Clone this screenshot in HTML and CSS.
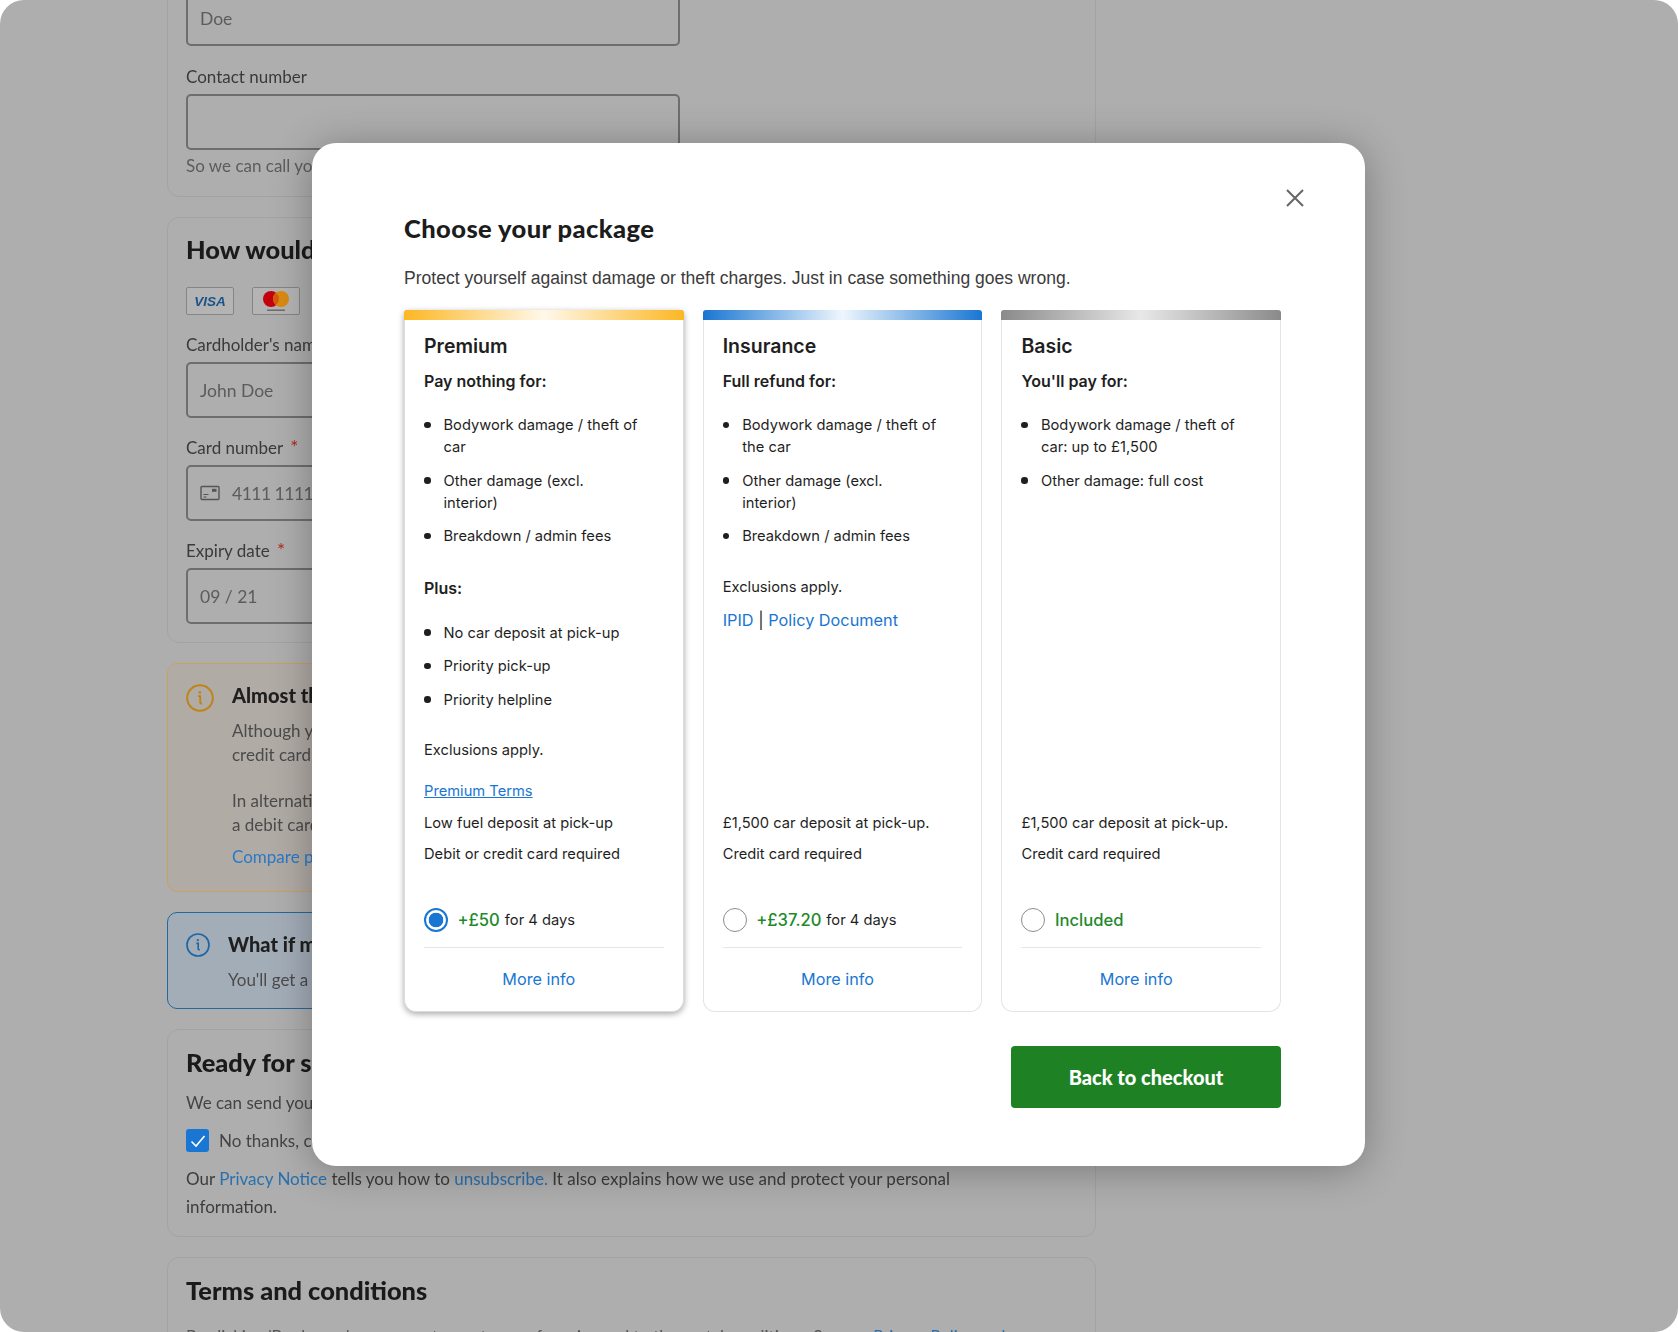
FILE: index.html
```html
<!DOCTYPE html>
<html lang="en">
<head>
<meta charset="utf-8">
<title>Choose your package</title>
<link rel="stylesheet" href="styles.css">
</head>
<body>
<div class="screen">
  <main class="checkout">
    <section class="panel panel-contact">
      <div class="input">Doe</div>
      <div class="label label-first">Contact number</div>
      <div class="input"></div>
      <p class="hint">So we can call you if there are any issues</p>
    </section>

    <section class="panel panel-pay">
      <h2 class="heading">How would you pay</h2>
      <div class="brands">
        <span class="brand"><span class="visa">VISA</span></span>
        <span class="brand">
          <svg class="mc" width="30" height="24" viewBox="0 0 30 24" aria-hidden="true">
            <circle cx="10" cy="10" r="8" fill="#c4000f"/>
            <circle cx="20" cy="10" r="8" fill="#d98a12"/>
            <path d="M15 3.8a8 8 0 0 1 0 12.4a8 8 0 0 1 0-12.4z" fill="#d55a0c"/>
            <rect x="6" y="20.5" width="18" height="1.4" fill="#666"/>
          </svg>
        </span>
      </div>
      <div class="label">Cardholder's name</div>
      <div class="input">John Doe</div>
      <div class="label">Card number <span class="req">*</span></div>
      <div class="input">
        <svg class="card-icon" width="20" height="16" viewBox="0 0 20 16" aria-hidden="true">
          <rect x="1" y="1.5" width="18" height="13" rx="1" fill="none" stroke="#555" stroke-width="1.4"/>
          <rect x="12" y="3.8" width="4.5" height="3" fill="#555"/>
          <path d="M3.5 9.5h5M3.5 12h3" stroke="#555" stroke-width="1.2"/>
        </svg>
        <span class="card-digits">4111 1111 1111 1111</span>
      </div>
      <div class="label">Expiry date <span class="req">*</span></div>
      <div class="input">09 / 21</div>
    </section>

    <section class="alert alert-amber">
      <svg class="alert-icon" width="28" height="28" viewBox="0 0 28 28" aria-hidden="true">
        <circle cx="14" cy="14" r="12.8" fill="none" stroke="#bf8416" stroke-width="2"/>
        <path d="M12 12.2h2.2v6.2c0 1 .6 1.3 1.9 1" fill="none" stroke="#bf8416" stroke-width="1.8"/>
        <circle cx="13.8" cy="8.4" r="1.3" fill="#bf8416"/>
      </svg>
      <div class="alert-body">
        <h3 class="alert-title">Almost there</h3>
        <p class="alert-text">Although you can pay by<br>credit card at pick-up</p>
        <p class="alert-text alert-gap">In alternative, you can use<br>a debit card at pick-up</p>
        <a class="alert-link">Compare packages</a>
      </div>
    </section>

    <section class="alert alert-blue">
      <svg class="alert-icon-small" width="24" height="24" viewBox="0 0 24 24" aria-hidden="true">
        <circle cx="12" cy="12" r="11" fill="none" stroke="#1f66a6" stroke-width="1.7"/>
        <path d="M10.4 10.4h1.8v5.4c0 .8.5 1.1 1.6.8" fill="none" stroke="#1f66a6" stroke-width="1.6"/>
        <circle cx="11.8" cy="7.2" r="1.1" fill="#1f66a6"/>
      </svg>
      <div class="alert-body">
        <h3 class="alert-title">What if my plans change?</h3>
        <p class="alert-text">You'll get a full refund if you cancel</p>
      </div>
    </section>

    <section class="panel panel-ready">
      <h2 class="heading">Ready for special offers?</h2>
      <p class="body-line">We can send you our latest deals</p>
      <div class="check-row">
        <span class="checkbox">
          <svg width="16" height="14" viewBox="0 0 16 14" aria-hidden="true"><path d="M1.5 7.5l4.5 4.5L14.5 2" fill="none" stroke="#fff" stroke-width="1.6"/></svg>
        </span>
        <span class="body-text">No thanks, conditions apply</span>
      </div>
      <p class="privacy">Our <a>Privacy Notice</a> tells you how to <a>unsubscribe.</a> It also explains how we use and protect your personal<br>information.</p>
    </section>

    <section class="panel panel-terms">
      <h2 class="heading">Terms and conditions</h2>
      <p class="terms-line">By clicking 'Book now', you agree to our terms of service and to the rental conditions. See our <a>Privacy Policy and</a></p>
    </section>
  </main>

  <div class="modal" role="dialog">
    <svg class="close" width="18" height="18" viewBox="0 0 18 18" aria-hidden="true"><path d="M1 1l16 16M17 1L1 17" stroke="#666" stroke-width="2" fill="none"/></svg>
    <h1 class="modal-title">Choose your package</h1>
    <p class="modal-sub">Protect yourself against damage or theft charges. Just in case something goes wrong.</p>

    <div class="plans">
      <article class="plan plan-selected">
        <div class="bar bar-amber"></div>
        <div class="plan-inner">
          <h2 class="plan-name">Premium</h2>
          <h3 class="plan-lead">Pay nothing for:</h3>
          <ul class="list">
            <li>Bodywork damage / theft of<br>car</li>
            <li>Other damage (excl.<br>interior)</li>
            <li>Breakdown / admin fees</li>
          </ul>
          <h3 class="plan-lead plan-plus">Plus:</h3>
          <ul class="list">
            <li>No car deposit at pick-up</li>
            <li>Priority pick-up</li>
            <li>Priority helpline</li>
          </ul>
          <p class="note">Exclusions apply.</p>
          <a class="terms-link">Premium Terms</a>
          <div class="req-block">
            <p>Low fuel deposit at pick-up</p>
            <p>Debit or credit card required</p>
          </div>
          <div class="price-row">
            <span class="radio radio-on"></span>
            <span class="price">+£50</span>
            <span class="per">for 4 days</span>
          </div>
          <a class="more">More info</a>
        </div>
      </article>

      <article class="plan">
        <div class="bar bar-blue"></div>
        <div class="plan-inner">
          <h2 class="plan-name">Insurance</h2>
          <h3 class="plan-lead">Full refund for:</h3>
          <ul class="list">
            <li>Bodywork damage / theft of<br>the car</li>
            <li>Other damage (excl.<br>interior)</li>
            <li>Breakdown / admin fees</li>
          </ul>
          <p class="note">Exclusions apply.</p>
          <p class="docs"><a>IPID</a> | <a>Policy Document</a></p>
          <div class="req-block">
            <p>£1,500 car deposit at pick-up.</p>
            <p>Credit card required</p>
          </div>
          <div class="price-row">
            <span class="radio"></span>
            <span class="price">+£37.20</span>
            <span class="per">for 4 days</span>
          </div>
          <a class="more">More info</a>
        </div>
      </article>

      <article class="plan">
        <div class="bar bar-grey"></div>
        <div class="plan-inner">
          <h2 class="plan-name">Basic</h2>
          <h3 class="plan-lead">You'll pay for:</h3>
          <ul class="list">
            <li>Bodywork damage / theft of<br>car: up to £1,500</li>
            <li>Other damage: full cost</li>
          </ul>
          <div class="req-block">
            <p>£1,500 car deposit at pick-up.</p>
            <p>Credit card required</p>
          </div>
          <div class="price-row">
            <span class="radio"></span>
            <span class="price">Included</span>
          </div>
          <a class="more">More info</a>
        </div>
      </article>
    </div>

    <div class="actions">
      <button class="back">Back to checkout</button>
    </div>
  </div>
</div>
</body>
</html>
```
FILE: styles.css
```css
* { box-sizing: border-box; }
html, body { margin: 0; padding: 0; background: #fff; }
h1, h2, h3, p, ul { margin: 0; padding: 0; }
.screen {
  position: relative;
  width: 1678px;
  height: 1332px;
  overflow: hidden;
  border-radius: 24px;
  background: #aeaeae;
  font-family: Lato, "Liberation Sans", sans-serif;
  color: #404040;
}
.checkout {
  width: 929px;
  margin: -30px 0 0 167px;
  display: flex;
  flex-direction: column;
  gap: 20px;
  filter: blur(.4px);
}
.panel {
  border: 1px solid #a3a3a3;
  border-radius: 12px;
  padding: 19px 18px 18px;
}
.panel-pay { padding-top: 15px; }
.panel-ready { padding: 16px 18px 15px; }
.panel-terms { padding-top: 16px; height: 120px; }
.heading {
  font-size: 25.4px;
  line-height: 32px;
  font-weight: 900;
  color: #1a1a1a;
}
.label {
  font-size: 17px;
  line-height: 24px;
  margin: 18px 0 5px;
  color: #3a3a3a;
}
.label-first { margin-top: 19px; }
.req { color: #b3261e; font-size: 19px; line-height: 1; margin-left: 3px; }
.input {
  width: 494px;
  height: 56px;
  border: 2px solid #6e6e6e;
  border-radius: 5px;
  padding: 0 12px;
  display: flex;
  align-items: center;
  gap: 12px;
  font-size: 17.5px;
  color: #5c5c5c;
}
.card-digits { letter-spacing: -.5px; white-space: nowrap; }
.hint { font-size: 17px; line-height: 24px; margin-top: 4px; color: #5c5c5c; }
.brands { display: flex; gap: 18px; margin-top: 22px; }
.brand {
  width: 48px;
  height: 28px;
  border: 1px solid #858585;
  border-radius: 2px;
  background: #b4b4b4;
  display: flex;
  align-items: center;
  justify-content: center;
}
.visa {
  font: italic 700 13.5px "Liberation Sans", sans-serif;
  color: #1a5389;
}
.mc { display: block; }
.card-icon { flex: none; }

.alert {
  border-radius: 10px;
  border: 1.5px solid;
  display: flex;
  padding-left: 18px;
}
.alert-amber {
  background: #b1aba6;
  border-color: #cc9f63;
  height: 229px;
  padding-top: 17px;
  gap: 18px;
}
.alert-blue {
  background: #a3adb8;
  border-color: #22699f;
  height: 97px;
  padding-top: 16.5px;
  gap: 18px;
}
.alert-icon { margin-top: 2.5px; flex: none; }
.alert-icon-small { margin-top: 3.5px; flex: none; }
.alert-title { font-size: 20px; line-height: 28px; font-weight: 900; color: #1f1f1f; }
.alert-text { font-size: 17px; line-height: 23.5px; margin-top: 10px; color: #4b4b4b; }
.alert-gap { margin-top: 23px; }
.alert-link { display: block; font-size: 17px; line-height: 24px; margin-top: 9px; color: #2a79c6; }

.body-line { font-size: 17px; line-height: 24px; margin-top: 13px; color: #444; }
.check-row { display: flex; align-items: center; gap: 10px; margin-top: 14px; }
.checkbox {
  width: 23px;
  height: 23px;
  border-radius: 3px;
  background: #1976d2;
  display: flex;
  align-items: center;
  justify-content: center;
}
.body-text { font-size: 17px; color: #444; }
.privacy { font-size: 17.03px; line-height: 28px; margin-top: 13px; color: #3c3c3c; }
.privacy a { color: #2a70ae; }
.terms-line { font-size: 16.8px; line-height: 24px; margin-top: 19px; color: #555; white-space: nowrap; }
.terms-line a { color: #2a70ae; }

.modal {
  position: absolute;
  left: 312px;
  top: 143px;
  width: 1053px;
  height: 1023px;
  background: #fff;
  border-radius: 24px;
  padding: 69px 84px 58px 92px;
  box-shadow: 0 4px 40px rgba(0, 0, 0, .3);
  color: #1f1f1f;
  font-family: Inter, "Liberation Sans", sans-serif;
}
.close { position: absolute; right: 61px; top: 46px; }
.modal-title {
  font-family: Lato, sans-serif;
  font-size: 25.5px;
  letter-spacing: .42px;
  line-height: 32px;
  font-weight: 900;
  color: #1c1c1c;
}
.modal-sub {
  font-family: "Liberation Sans", sans-serif;
  font-size: 17.55px;
  line-height: 24px;
  margin-top: 22px;
  color: #3b3b3b;
}
.plans {
  display: grid;
  grid-template-columns: repeat(3, 279.6px);
  justify-content: space-between;
  height: 702px;
  margin-top: 20px;
}
.plan {
  display: flex;
  flex-direction: column;
  border: 1px solid #e4e4e4;
  border-top: 0;
  border-radius: 4px 4px 12px 12px;
  background: #fff;
}
.plan-selected { box-shadow: 0 2px 6px rgba(0, 0, 0, .35); border-color: #dcdcdc; }
.bar { height: 10px; margin: 0 -1px; border-radius: 3px 3px 0 0; flex: none; }
.bar-amber { background: linear-gradient(90deg, #fcb723, #fff8ea 50%, #fcb723); }
.bar-blue { background: linear-gradient(90deg, #1976d2, #eef6fd 50%, #1976d2); }
.bar-grey { background: linear-gradient(90deg, #8a8a8a, #e8e8e8 50%, #8a8a8a); }
.plan-inner {
  flex: 1;
  display: flex;
  flex-direction: column;
  padding: 12px 19px 20px;
}
.plan-name { font-size: 19.5px; line-height: 28px; font-weight: 600; }
.plan-lead { font-size: 16px; line-height: 24px; font-weight: 600; margin-top: 9px; }
.plan-plus { margin-top: 28.5px; }
.list { list-style: none; margin-top: 21px; display: flex; flex-direction: column; gap: 11.5px; }
.plan-plus + .list { margin-top: 22px; }
.list li {
  display: flex;
  gap: 13px;
  font-size: 14.7px;
  line-height: 22px;
}
.list li::before {
  content: "";
  flex: none;
  width: 6.5px;
  height: 6.5px;
  border-radius: 50%;
  background: #1f1f1f;
  margin-top: 7.5px;
}
.note { font-size: 14.7px; line-height: 22px; margin-top: 28.5px; }
.terms-link {
  font-size: 14.7px;
  line-height: 22px;
  margin-top: 19px;
  color: #1976d2;
  text-decoration: underline;
}
.docs { font-size: 16.3px; line-height: 24px; margin-top: 10px; }
.docs a { color: #1976d2; }
.req-block {
  margin-top: auto;
  display: flex;
  flex-direction: column;
  gap: 9px;
  font-size: 14.7px;
  line-height: 22px;
}
.price-row {
  display: flex;
  align-items: center;
  margin-top: 43px;
  padding-bottom: 15px;
  border-bottom: 1px solid #e6e6e6;
  height: 40px;
}
.radio {
  width: 24px;
  height: 24px;
  border-radius: 50%;
  border: 1.5px solid #8c8c8c;
  margin-right: 9.5px;
  flex: none;
}
.radio-on {
  border: 2.5px solid #1976d2;
  background: radial-gradient(circle, #1976d2 0 7px, #fff 7.6px);
}
.price { font-size: 16.6px; color: #1e8a2a; font-weight: 500; margin-right: 5px; }
.per { font-size: 14.7px; }
.more {
  text-align: center;
  font-size: 16.2px;
  line-height: 24px;
  margin-top: 19px;
  padding-right: 10px;
  color: #1976d2;
}
.actions { display: flex; justify-content: flex-end; margin-top: 34px; }
.back {
  width: 270px;
  height: 62px;
  border: 0;
  border-radius: 4px;
  background: #1e8224;
  color: #fff;
  font-family: Lato, sans-serif;
  font-size: 20px;
  font-weight: 900;
}
```
